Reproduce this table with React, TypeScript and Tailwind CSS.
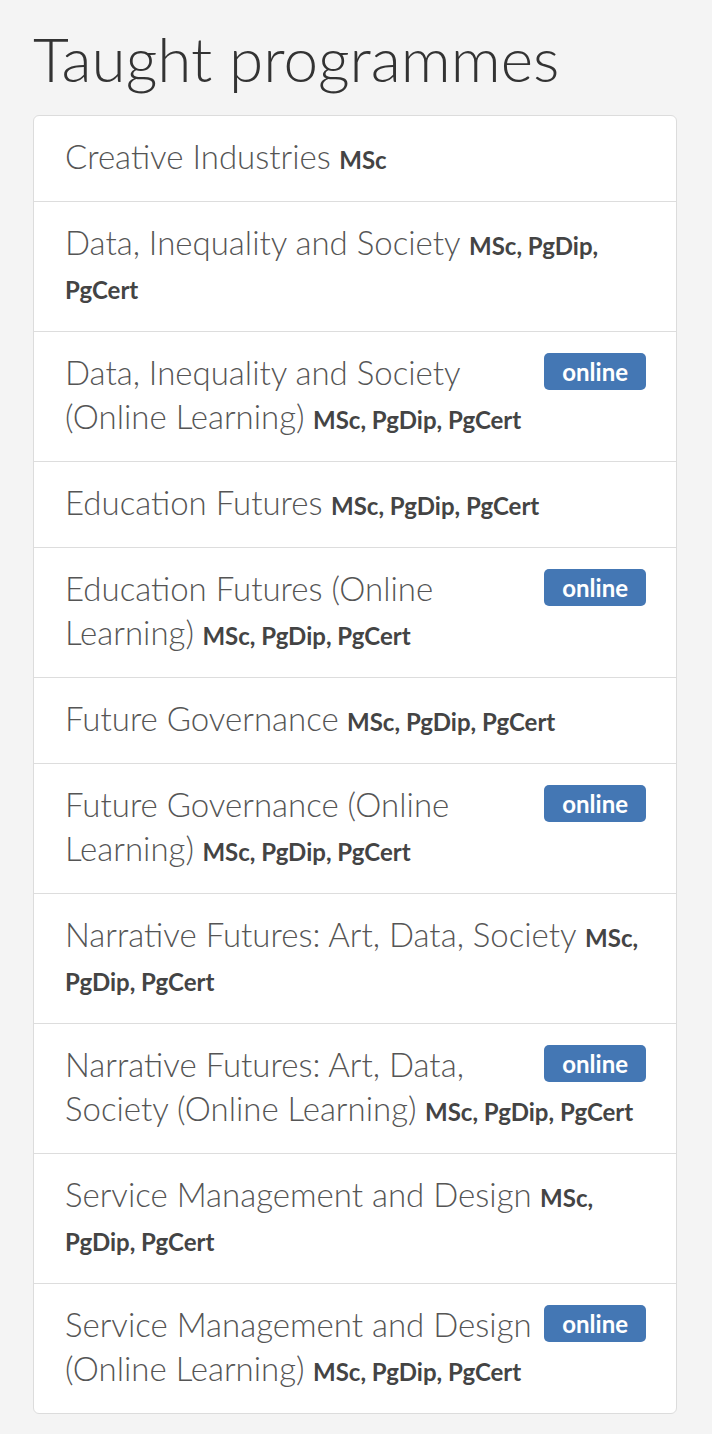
type Programme = {
  name: string
  awards: string
  online?: boolean
}

const programmes: Programme[] = [
  { name: 'Creative Industries', awards: 'MSc' },
  { name: 'Data, Inequality and Society', awards: 'MSc, PgDip, PgCert' },
  { name: 'Data, Inequality and Society (Online Learning)', awards: 'MSc, PgDip, PgCert', online: true },
  { name: 'Education Futures', awards: 'MSc, PgDip, PgCert' },
  { name: 'Education Futures (Online Learning)', awards: 'MSc, PgDip, PgCert', online: true },
  { name: 'Future Governance', awards: 'MSc, PgDip, PgCert' },
  { name: 'Future Governance (Online Learning)', awards: 'MSc, PgDip, PgCert', online: true },
  { name: 'Narrative Futures: Art, Data, Society', awards: 'MSc, PgDip, PgCert' },
  { name: 'Narrative Futures: Art, Data, Society (Online Learning)', awards: 'MSc, PgDip, PgCert', online: true },
  { name: 'Service Management and Design', awards: 'MSc, PgDip, PgCert' },
  { name: 'Service Management and Design (Online Learning)', awards: 'MSc, PgDip, PgCert', online: true },
]

function ProgrammeRow({ programme }: { readonly programme: Programme }) {
  return (
    <li className="border-b border-[#dddddd] pt-[18px] pb-[23px] pl-[31px] pr-[30px] text-[33px] leading-[44px] last:border-b-0">
      {programme.online && (
        <span className="float-right mt-[3px] ml-2 rounded-[5px] bg-[#4477b4] px-[18px] text-[24px] leading-[37px] font-bold text-white">
          online
        </span>
      )}
      <a href="#" className="font-light text-[#555555]">
        {programme.name}
      </a>{' '}
      <span className="text-[24px] leading-none font-bold text-[#444444]">{programme.awards}</span>
    </li>
  )
}

export default function App() {
  return (
    <div className="min-h-screen bg-[#f4f4f4] pt-[18px] pr-[35px] pb-6 pl-[33px] font-['Lato',sans-serif]">
      <h1 className="text-[62px] leading-[80px] font-light text-[#333333]">Taught programmes</h1>
      <ul className="mt-[17px] rounded-[6px] border border-[#dcdcdc] bg-white">
        {programmes.map((p) => (
          <ProgrammeRow key={p.name} programme={p} />
        ))}
      </ul>
    </div>
  )
}
